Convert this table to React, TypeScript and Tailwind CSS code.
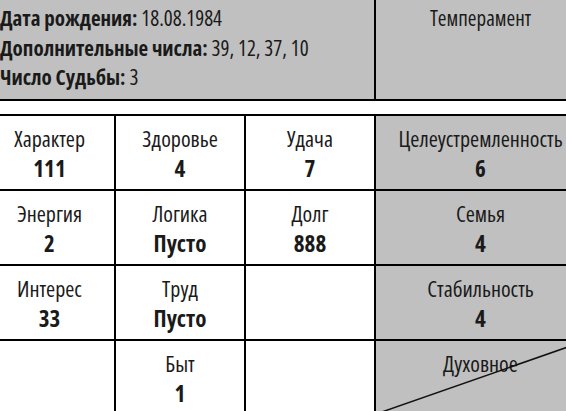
import React from "react";

type Cell = { label?: string; value?: string; gray?: boolean; diag?: boolean };

const cells: Cell[] = [
  { label: "Характер", value: "111" },
  { label: "Здоровье", value: "4" },
  { label: "Удача", value: "7" },
  { label: "Целеустремленность", value: "6", gray: true },
  { label: "Энергия", value: "2" },
  { label: "Логика", value: "Пусто" },
  { label: "Долг", value: "888" },
  { label: "Семья", value: "4", gray: true },
  { label: "Интерес", value: "33" },
  { label: "Труд", value: "Пусто" },
  {},
  { label: "Стабильность", value: "4", gray: true },
  {},
  { label: "Быт", value: "1" },
  {},
  { label: "Духовное", gray: true, diag: true },
];

export default function App() {
  return (
    <div
      className="w-[566px] h-[411px] overflow-hidden bg-white text-[#1a1a1a] font-stretch-[77%]"
      style={{ fontFamily: '"Open Sans", sans-serif' }}
    >
      <div className="w-[600px] -ml-[15px]">
        <div className="grid grid-cols-[389px_1fr] gap-x-[2px] bg-black h-[101px] border-b-2 border-black">
          <div className="bg-[#c0c0c0] pl-[15px] pt-[4px] text-[21px] leading-[29.5px] font-stretch-[78%]">
            <div>
              <span className="font-bold">Дата рождения:</span> 18.08.1984
            </div>
            <div>
              <span className="font-bold">Дополнительные числа:</span> 39, 12, 37, 10
            </div>
            <div>
              <span className="font-bold">Число Судьбы:</span> 3
            </div>
          </div>
          <div className="bg-[#c0c0c0] pt-[4px] text-center text-[21px] leading-[29.5px]">
            Темперамент
          </div>
        </div>
        <div className="mt-[13px] grid grid-cols-[129px_128px_128px_1fr] auto-rows-[73px] gap-[2px] bg-black border-t-2 border-black">
          {cells.map((c, i) => (
            <div
              key={i}
              className={
                "relative flex flex-col items-center pt-[8px] " +
                (c.gray ? "bg-[#c0c0c0]" : "bg-white")
              }
            >
              {c.label && <div className="text-[22px] leading-[28px]">{c.label}</div>}
              {c.value && (
                <div className="mt-[2px] text-[23px] leading-[29px] font-bold font-stretch-[76%]">
                  {c.value}
                </div>
              )}
              {c.diag && (
                <svg
                  className="absolute inset-0 w-full h-full"
                  viewBox="0 0 100 100"
                  preserveAspectRatio="none"
                >
                  <line
                    x1="0"
                    y1="100"
                    x2="100"
                    y2="0"
                    stroke="#111"
                    strokeWidth="1.5"
                    vectorEffect="non-scaling-stroke"
                  />
                </svg>
              )}
            </div>
          ))}
        </div>
      </div>
    </div>
  );
}
